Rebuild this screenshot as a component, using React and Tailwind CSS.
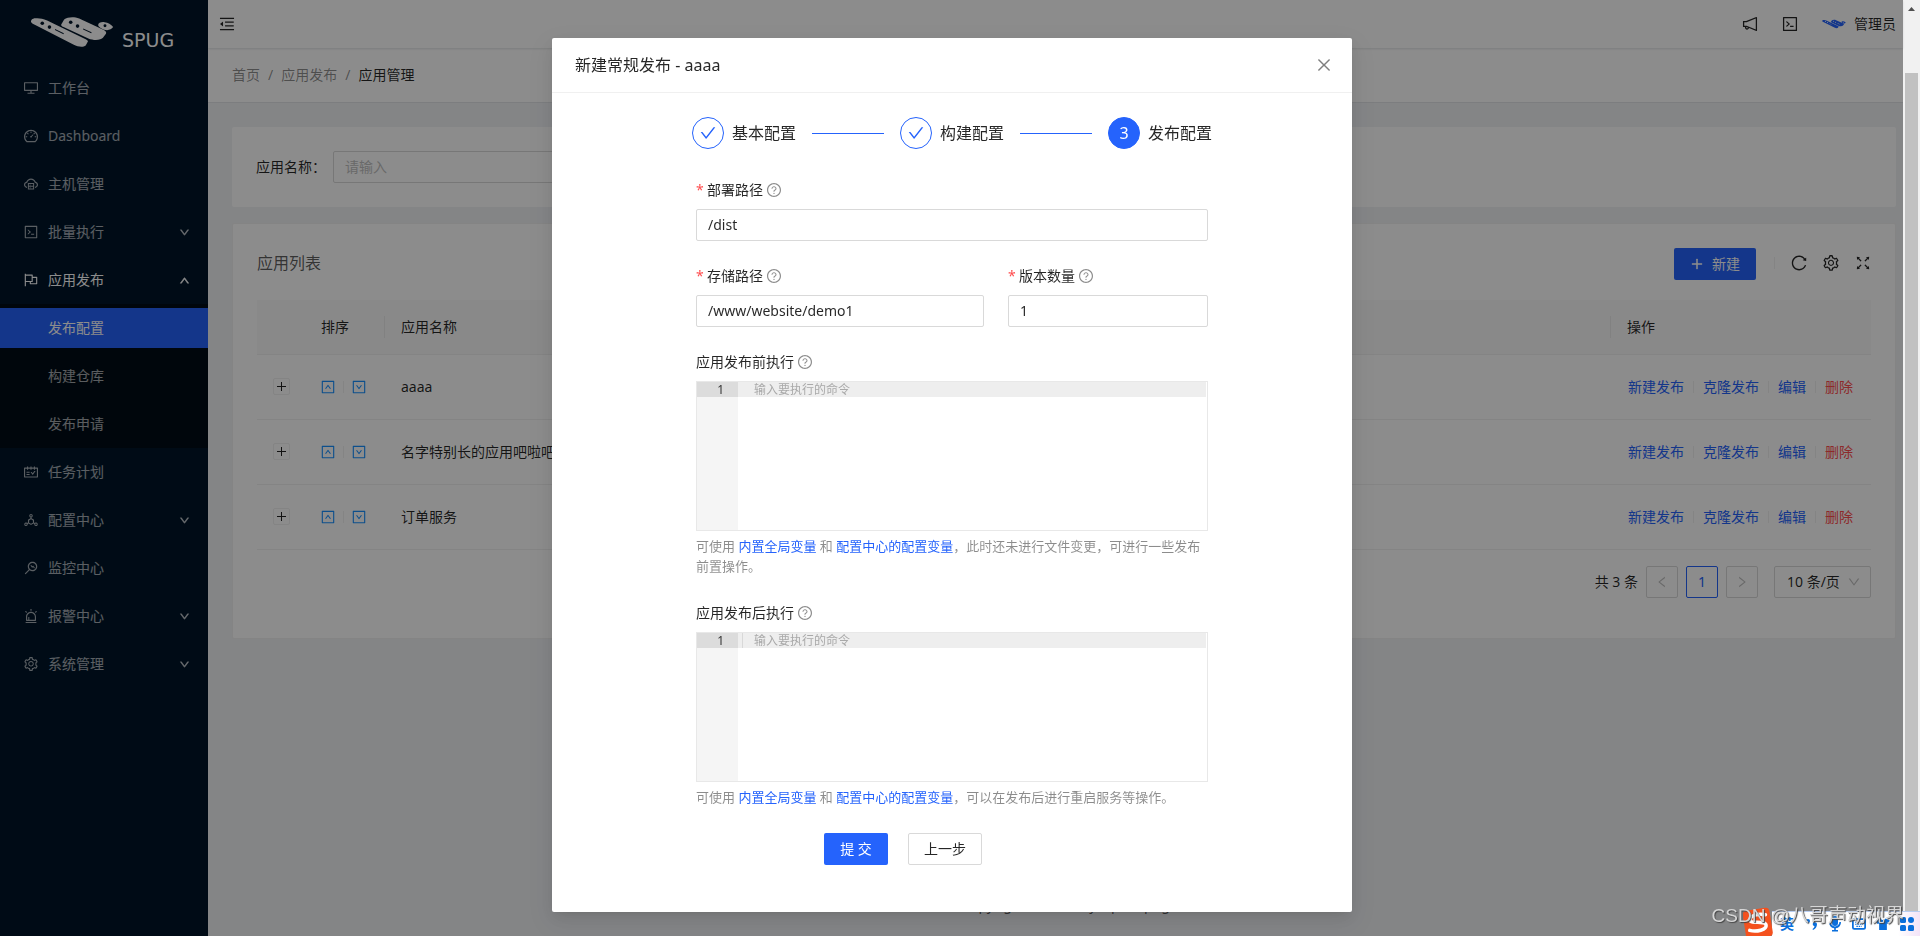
import {
  AiOutlineAlert,
  AiOutlineCheck,
  AiOutlineClose,
  AiOutlineCloudServer,
  AiOutlineCode,
  AiOutlineDashboard,
  AiOutlineDeploymentUnit,
  AiOutlineDesktop,
  AiOutlineDown,
  AiOutlineDownSquare,
  AiOutlineFlag,
  AiOutlineFullscreen,
  AiOutlineLeft,
  AiOutlineMenuFold,
  AiOutlineMonitor,
  AiOutlineNotification,
  AiOutlinePlus,
  AiOutlineQuestionCircle,
  AiOutlineReload,
  AiOutlineRight,
  AiOutlineSchedule,
  AiOutlineSetting,
  AiOutlineUp,
  AiOutlineUpSquare,
} from "react-icons/ai";

function SpugMark({ className, dotClass }) {
  return (
    <svg viewBox="28 26 256 98" className={className} aria-hidden="true">
      <g fill="currentColor">
        <path d="M44 33C34 33 29 40 31 45C33 49 38 51 42 53L160 113C176 121 190 122 198 116L205 103Q204 100 198 97L80 40C66 34 56 32 44 33Z" />
        <path d="M123 52L132 37C142 29 162 27 178 34L252 68C260 72 262 76 260 80L252 91C244 101 224 102 206 95L130 60C124 57 122 55 123 52Z" />
        <path d="M236 54C236 47 246 43 256 45C266 46 276 52 282 60C276 69 264 72 252 67C244 63 238 60 236 54Z" />
      </g>
      <g className={dotClass}>
        <circle cx="65" cy="48" r="5.5" />
        <circle cx="87" cy="60" r="5.5" />
        <circle cx="152" cy="45" r="5.5" />
        <circle cx="173" cy="57" r="5.5" />
        <circle cx="257" cy="56" r="4.5" />
        <path d="M104 66L131 79L130 82L104 69Z" />
        <path d="M190 64L216 76L215 79L190 67Z" />
      </g>
    </svg>
  );
}

const menu = [
  { label: "工作台", icon: AiOutlineDesktop },
  { label: "Dashboard", icon: AiOutlineDashboard },
  { label: "主机管理", icon: AiOutlineCloudServer },
  { label: "批量执行", icon: AiOutlineCode, arrow: "down" },
  {
    label: "应用发布",
    icon: AiOutlineFlag,
    arrow: "up",
    children: [{ label: "发布配置", active: true }, { label: "构建仓库" }, { label: "发布申请" }],
  },
  { label: "任务计划", icon: AiOutlineSchedule },
  { label: "配置中心", icon: AiOutlineDeploymentUnit, arrow: "down" },
  { label: "监控中心", icon: AiOutlineMonitor },
  { label: "报警中心", icon: AiOutlineAlert, arrow: "down" },
  { label: "系统管理", icon: AiOutlineSetting, arrow: "down" },
];

function Sidebar() {
  return (
    <aside className="w-52 shrink-0 bg-[#001529] text-white/65">
      <div className="flex h-16 items-center gap-2 pl-[30px] text-white">
        <SpugMark className="h-8 w-[84px]" dotClass="fill-[#001529]" />
        <span className="pt-4 font-['DejaVu_Sans'] text-[19px] leading-6">SPUG</span>
      </div>
      <nav>
        <ul>
          {menu.map(({ label, icon: Icon, arrow, children }) => (
            <li key={label}>
              <a
                href="#"
                className={`flex h-12 items-center pr-[18px] pl-[23px] ${children ? "text-white" : ""}`}
              >
                <Icon className="mr-[9px] size-4" />
                <span className="flex-1">{label}</span>
                {arrow === "down" && <AiOutlineDown className="size-[11px] stroke-[60]" />}
                {arrow === "up" && <AiOutlineUp className="size-[11px] stroke-[60]" />}
              </a>
              {children && (
                <ul className="bg-[#000c17]">
                  {children.map((c) => (
                    <li key={c.label} className="py-1">
                      <a
                        href="#"
                        className={`flex h-10 items-center pl-12 ${
                          c.active ? "bg-[#2563fc] text-white" : "text-white/65"
                        }`}
                      >
                        {c.label}
                      </a>
                    </li>
                  ))}
                </ul>
              )}
            </li>
          ))}
        </ul>
      </nav>
    </aside>
  );
}

function Divider() {
  return <span className="mx-[9px] inline-block h-3 w-px bg-black/6" />;
}

const apps = ["aaaa", "名字特别长的应用吧啦吧啦", "订单服务"];

function AppTable() {
  return (
    <table className="w-full table-fixed border-collapse text-left">
      <colgroup>
        <col className="w-12" />
        <col className="w-20" />
        <col />
        <col className="w-[260px]" />
      </colgroup>
      <thead>
        <tr className="h-[54px] border-b border-[#f0f0f0] bg-[#fafafa]">
          <th />
          <th className="p-0 font-normal">
            <div className="border-r border-black/6 pl-4">排序</div>
          </th>
          <th className="p-0 font-normal">
            <div className="border-r border-black/6 pl-4">应用名称</div>
          </th>
          <th className="px-4 font-normal">操作</th>
        </tr>
      </thead>
      <tbody>
        {apps.map((name) => (
          <tr key={name} className="h-[65px] border-b border-[#f0f0f0]">
            <td className="pl-4">
              <button
                type="button"
                aria-label={`展开 ${name}`}
                className="flex size-[17px] items-center justify-center rounded-xs border border-[#f0f0f0]"
              >
                <svg viewBox="0 0 9 9" className="size-[9px]" aria-hidden="true">
                  <path d="M4 0H5V4H9V5H5V9H4V5H0V4H4Z" fill="#222" />
                </svg>
              </button>
            </td>
            <td className="px-[15px]">
              <div className="flex items-center text-[#1890ff]">
                <button type="button" aria-label="上移">
                  <AiOutlineUpSquare className="size-4" />
                </button>
                <span className="mx-[7px] h-3 w-px bg-black/6" />
                <button type="button" aria-label="下移">
                  <AiOutlineDownSquare className="size-4" />
                </button>
              </div>
            </td>
            <td className="truncate px-4">{name}</td>
            <td className="pl-[17px] whitespace-nowrap text-[#2563fc]">
              <div className="flex items-center">
                <a href="#">新建发布</a>
                <Divider />
                <a href="#">克隆发布</a>
                <Divider />
                <a href="#">编辑</a>
                <Divider />
                <a href="#" className="text-[#ff4d4f]">
                  删除
                </a>
              </div>
            </td>
          </tr>
        ))}
      </tbody>
    </table>
  );
}

function Page() {
  return (
    <div className="flex min-w-0 flex-1 flex-col bg-[#f0f2f5]">
      <header className="z-10 flex h-12 items-center bg-white pr-[7px] pl-2.5 shadow-[0_1px_2px_rgba(0,21,41,0.12)]">
        <button type="button" aria-label="收起菜单">
          <AiOutlineMenuFold className="size-[18px]" />
        </button>
        <div className="ml-auto flex items-center">
          <AiOutlineNotification className="size-[18px]" />
          <AiOutlineCode className="ml-[22px] size-[18px]" />
          <SpugMark className="mr-2 ml-[23px] h-[10px] w-6 text-[#2563fc]" dotClass="fill-white" />
          <span>管理员</span>
        </div>
      </header>

      <nav className="flex h-[55px] items-center border-b border-[#e2e4e8] bg-white px-6 pb-px text-black/45">
        <a href="#">首页</a>
        <span className="mx-2">/</span>
        <a href="#">应用发布</a>
        <span className="mx-2">/</span>
        <span className="text-black/85">应用管理</span>
      </nav>

      <main className="mt-6 mr-[7px] ml-6 flex flex-col gap-4">
        <section className="flex h-20 items-center rounded-xs bg-white px-6">
          <label htmlFor="app-name" className="w-[77px]">
            应用名称：
          </label>
          <input
            id="app-name"
            placeholder="请输入"
            className="h-8 w-80 rounded-xs border border-[#d9d9d9] px-[11px] pb-0.5 placeholder:text-[#bfbfbf]"
          />
        </section>

        <section className="rounded-xs border border-[#f0f0f0] bg-white px-6 pb-10">
          <div className="flex h-[76px] items-center pt-px">
            <h2 className="text-base leading-6 font-normal text-black/65">应用列表</h2>
            <button
              type="button"
              className="mt-0.5 ml-auto flex h-8 items-center gap-2 rounded-xs bg-[#2563fc] px-4 text-white"
            >
              <AiOutlinePlus className="size-3.5 stroke-[40]" />
              新建
            </button>
            <span className="mr-[15px] ml-[18px] h-3 w-px bg-black/6" />
            <div className="-mr-px flex gap-3.5">
              <AiOutlineReload className="size-[18px]" />
              <AiOutlineSetting className="size-[18px]" />
              <AiOutlineFullscreen className="size-[18px]" />
            </div>
          </div>
          <AppTable />
          <div className="mt-4 flex items-center justify-end gap-2">
            <span>共 3 条</span>
            <button
              type="button"
              aria-label="上一页"
              className="flex size-8 items-center justify-center rounded-xs border border-[#d9d9d9] text-black/25"
            >
              <AiOutlineLeft className="size-3.5" />
            </button>
            <button
              type="button"
              className="size-8 rounded-xs border border-[#2563fc] text-[#2563fc]"
            >
              1
            </button>
            <button
              type="button"
              aria-label="下一页"
              className="flex size-8 items-center justify-center rounded-xs border border-[#d9d9d9] text-black/25"
            >
              <AiOutlineRight className="size-3.5" />
            </button>
            <div className="relative ml-2">
              <select
                aria-label="每页条数"
                className="h-8 w-[97px] appearance-none rounded-xs border border-[#d9d9d9] bg-white pl-3"
              >
                <option>10 条/页</option>
              </select>
              <AiOutlineDown className="pointer-events-none absolute top-[9px] right-2.5 size-3.5 text-black/25" />
            </div>
          </div>
        </section>
      </main>

      <footer className="mt-auto pb-5 pl-5 text-center text-black/65">
        Copyright © 2021 By OpenSpug
      </footer>
    </div>
  );
}

function Label({ htmlFor, required, children }) {
  return (
    <label htmlFor={htmlFor} className="mb-2 flex h-[22px] items-center">
      {required && <span className="mr-1 w-[7px] text-[#ff4d4f]">*</span>}
      {children}
      <AiOutlineQuestionCircle className="ml-[3px] size-4 text-black/45" />
    </label>
  );
}

function TextField({ id, label, value }) {
  return (
    <div>
      <Label htmlFor={id} required>
        {label}
      </Label>
      <input
        id={id}
        defaultValue={value}
        className="block h-8 w-full rounded-xs border border-[#d9d9d9] px-[11px] pb-0.5"
      />
    </div>
  );
}

function ScriptField({ id, label, focused, children }) {
  return (
    <div>
      <Label htmlFor={id}>{label}</Label>
      <div className="relative flex h-[150px] border border-[#e8e8e8] pr-px text-xs leading-[15px]">
        <div className="w-[41px] bg-[#f5f5f5] text-[#333]">
          <div className="bg-[#dcdcdc] pr-3.5 text-right">1</div>
        </div>
        <textarea
          id={id}
          placeholder="输入要执行的命令"
          className="flex-1 resize-none bg-[linear-gradient(#eeeeee,#eeeeee)] bg-[length:100%_15px] bg-no-repeat pl-4 placeholder:text-[#a9a9a9]"
        />
        {focused && <span className="absolute top-0 left-[45px] h-[15px] w-px bg-[#d8d8d8]" />}
      </div>
      <p className="mt-[5px] mb-0.5 text-[13px] leading-5 text-black/45">
        可使用{" "}
        <a href="#" className="text-[#2563fc]">
          内置全局变量
        </a>{" "}
        和{" "}
        <a href="#" className="text-[#2563fc]">
          配置中心的配置变量
        </a>
        {children}
      </p>
    </div>
  );
}

function StepTitle({ done, number, children }) {
  return (
    <li className="flex items-center gap-2 text-base">
      <span
        className={`flex size-8 items-center justify-center rounded-full border border-[#2563fc] ${
          done ? "text-[#2563fc]" : "bg-[#2563fc] text-white"
        }`}
      >
        {done ? <AiOutlineCheck className="size-[18px]" /> : number}
      </span>
      {children}
    </li>
  );
}

function ReleaseModal() {
  return (
    <div
      role="dialog"
      aria-labelledby="modal-title"
      className="w-[800px] max-w-full self-start rounded-xs bg-white shadow-[0_3px_6px_-4px_rgba(0,0,0,0.12),0_6px_16px_rgba(0,0,0,0.08),0_9px_28px_8px_rgba(0,0,0,0.05)]"
    >
      <div className="flex h-[55px] items-center justify-between border-b border-[#f0f0f0] pr-[19px] pl-[23px]">
        <h1 id="modal-title" className="text-base leading-6 font-normal">
          新建常规发布 - aaaa
        </h1>
        <button type="button" aria-label="关闭" className="text-black/50">
          <AiOutlineClose className="size-[18px]" />
        </button>
      </div>
      <div className="px-6 pt-6 pb-[47px]">
        <ol className="mb-[30px] flex items-center gap-4 px-[116px]">
          <StepTitle done>基本配置</StepTitle>
          <li className="h-px flex-1 bg-[#2563fc]" aria-hidden="true" />
          <StepTitle done>构建配置</StepTitle>
          <li className="h-px flex-1 bg-[#2563fc]" aria-hidden="true" />
          <StepTitle number={3}>发布配置</StepTitle>
        </ol>
        <form className="flex flex-col gap-6 px-[120px]">
          <TextField id="deploy-path" label="部署路径" value="/dist" />
          <div className="grid grid-cols-[288fr_200fr] gap-6">
            <TextField id="store-path" label="存储路径" value="/www/website/demo1" />
            <TextField id="versions" label="版本数量" value="1" />
          </div>
          <ScriptField id="before" label="应用发布前执行">
            ，此时还未进行文件变更，可进行一些发布前置操作。
          </ScriptField>
          <ScriptField id="after" label="应用发布后执行" focused>
            ，可以在发布后进行重启服务等操作。
          </ScriptField>
          <div className="flex gap-5 pl-32">
            <button type="button" className="h-8 w-16 rounded-xs bg-[#2563fc] text-white">
              提 交
            </button>
            <button type="button" className="h-8 rounded-xs border border-[#d9d9d9] px-[15px]">
              上一步
            </button>
          </div>
        </form>
      </div>
    </div>
  );
}

function InputMethodBar() {
  return (
    <div className="fixed right-0 bottom-0 z-40 flex h-[29px] items-end">
      <svg viewBox="0 0 30 29" className="z-10 -mr-px h-[29px] w-[30px]" aria-hidden="true">
        <g transform="rotate(-9 15 15)">
          <rect x="1" y="2" width="27" height="29" rx="4" fill="#f4511e" />
          <path
            d="M23.500 9C17 6.500 7.500 7 7.500 12C7.500 16.500 22.500 14 22.500 19.500C22.500 24 12 25 5.500 22"
            fill="none"
            stroke="#fff"
            strokeWidth="3.5"
            strokeLinecap="round"
          />
        </g>
      </svg>
      <div className="flex h-[25px] items-center gap-2.5 border-t border-[#b8cdf0] bg-gradient-to-r from-white from-85% to-[#f3e3f7] pr-1.5 pl-2 text-[#0a6fdc]">
        <span className="text-sm leading-5 font-bold">英</span>
        <svg viewBox="0 0 14 14" className="size-3.5" fill="currentColor" aria-hidden="true">
          <circle cx="4" cy="4" r="2" />
          <path d="M9 6A2.300 2.300 0 0 1 13 7C13 10 11.500 12 9 13L8.500 12C10 11 10.500 10 10.500 9.300A2.300 2.300 0 0 1 9 6Z" />
        </svg>
        <svg viewBox="0 0 14 16" className="h-4 w-3.5" fill="currentColor" aria-hidden="true">
          <rect x="4" y="0" width="6" height="10" rx="3" />
          <path d="M1 6H2.600A4.400 4.400 0 0 0 11.400 6H13A6 6 0 0 1 7.800 12.300V14H10V15.500H4V14H6.200V12.300A6 6 0 0 1 1 6Z" />
        </svg>
        <svg viewBox="0 0 16 13" className="h-3 w-3.5" aria-hidden="true">
          <rect x="1" y="1" width="14" height="11" rx="1.500" fill="none" stroke="currentColor" strokeWidth="2" />
          <path d="M3.500 4.500H12.500M3.500 6.800H12.500M5 9.200H11" stroke="currentColor" strokeWidth="1.300" strokeDasharray="1.700 1" />
        </svg>
        <svg viewBox="0 0 16 14" className="h-3 w-3.5" fill="currentColor" aria-hidden="true">
          <path d="M5 0.500Q8 4 11 0.500L16 3L14.500 7L12.500 6.500V14H3.500V6.500L1.500 7L0 3Z" />
        </svg>
        <svg viewBox="0 0 14 14" className="size-3.5" fill="currentColor" aria-hidden="true">
          <rect x="0" y="0" width="6" height="6" rx="1.500" />
          <rect x="8" y="0" width="6" height="6" rx="3" />
          <rect x="0" y="8" width="6" height="6" rx="1.500" />
          <rect x="8" y="8" width="6" height="6" rx="1.500" />
        </svg>
      </div>
    </div>
  );
}

export default function App() {
  return (
    <div className="flex min-h-screen font-['Noto_Sans','Noto_Sans_CJK_SC',sans-serif] text-sm leading-[22px] text-black/85">
      <Sidebar />
      <Page />
      <div className="flex w-[17px] shrink-0 flex-col items-center bg-[#f1f1f1]">
        <svg viewBox="0 0 17 17" className="size-[17px]" aria-hidden="true">
          <path d="M8.500 7L12 11H5Z" fill="#505050" />
        </svg>
        <div className="mt-14 w-[13px] flex-1 bg-[#c1c1c1]" />
      </div>
      <div className="fixed inset-y-0 right-[17px] left-0 z-20 flex justify-center overflow-hidden bg-black/45 pt-[38px] pl-px">
        <ReleaseModal />
      </div>
      <InputMethodBar />
      <div className="fixed right-4 bottom-1.5 z-50 font-['Liberation_Sans','Noto_Sans_CJK_SC',sans-serif] text-[19px] leading-7 text-[#d6d6d6] [text-shadow:1px_1px_1px_#444]">
        CSDN @八哥声动视界
      </div>
    </div>
  );
}
